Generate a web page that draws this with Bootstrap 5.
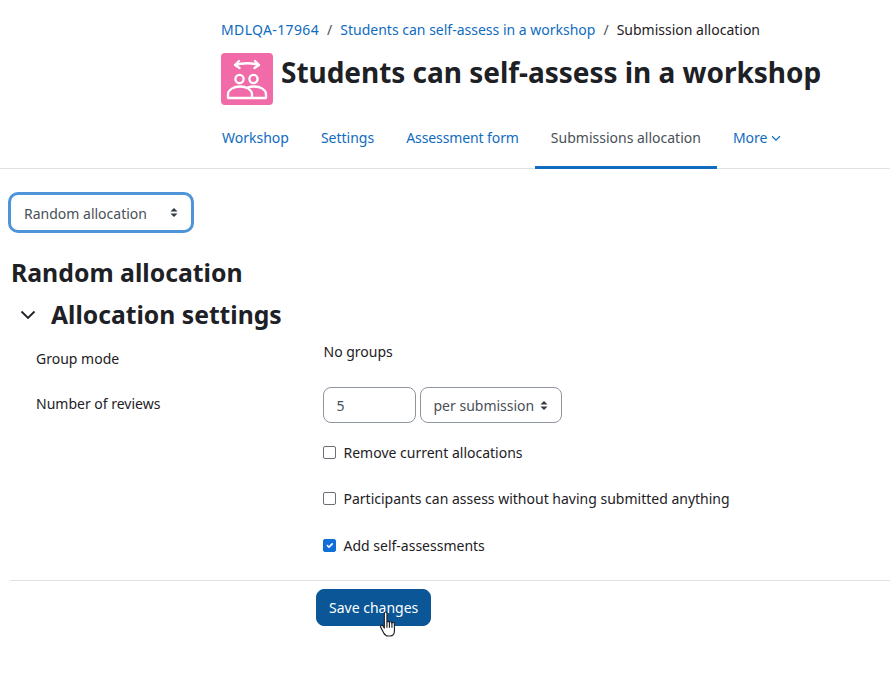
<!DOCTYPE html>
<html lang="en"><head><meta charset="utf-8"><title>Submission allocation</title>
<link rel="stylesheet" href="https://cdn.jsdelivr.net/npm/bootstrap@5.3.0/dist/css/bootstrap.min.css">
<style>
html,body{height:695px;overflow:hidden;background:#fff}
body{font-family:"Noto Sans","Open Sans",sans-serif;font-size:14px;color:#1d2125;line-height:21px}
a{text-decoration:none;color:#0f6cbf}
.hdr{padding:19px 0 0 221px}
.crumbs{--bs-breadcrumb-margin-bottom:0;--bs-breadcrumb-divider-color:#495057;--bs-breadcrumb-item-active-color:#1d2125;--bs-breadcrumb-item-padding-x:8px;height:21px}
.crumb-code{letter-spacing:.36px}
.titlerow{margin-top:13px;height:52px}
.modicon{width:52px;height:52px;border-radius:4px;background:#f06ba8;flex:none}
.pagetitle{font-size:28px;font-weight:700;line-height:40px;margin:-1px 0 0 8px;letter-spacing:-.03px}
.tabs{--bs-nav-link-padding-x:16px;--bs-nav-link-padding-y:0;--bs-nav-link-color:#0f6cbf;--bs-nav-link-hover-color:#0f6cbf;height:63px;font-size:14px}
.tabwrap{border-bottom:1px solid #dee2e6;height:64px;padding-left:206px}
.tabs .nav-link{line-height:21px;padding-top:22px;padding-bottom:19px;height:64px}
.tabs .nav-link.active{color:#495057;border-bottom:3px solid #0f6cbf}
.tabs .nav-item:nth-child(3) .nav-link{letter-spacing:-.1px}
.chev{width:10px;height:7px;margin-left:4px;vertical-align:1px}
.main{padding:23px 0 0 10px}
.focusbox{width:186px;height:41px;margin-left:-2px;border:3px solid #4e94d8;border-radius:10px;padding:2px 13px 0;color:#495057;background:#fff}
.updown{width:8px;height:11px;flex:none}
.focusbox .updown{margin-top:-2px}
.h-random{font-size:24.8px;font-weight:700;line-height:30px;margin:24px 0 0 1px}
.legendrow{margin:12px 0 0 10px;height:32px}
.legendrow h3{font-size:24.7px;font-weight:700;margin:0 0 0 15px;line-height:32px}
.rowline{padding-left:26px}
.lab{width:286.5px;flex:none}
.val{flex:1}
.r1{margin-top:11px;height:35px;padding-top:6px}
.val-static{margin-top:-7px;padding-left:1px}
.numbox{width:93px;height:36px;border:1px solid #8f959e;border-radius:8px;padding:0 13px;line-height:36px;color:#495057}
.perbox{width:142px;height:36px;border:1px solid #8f959e;border-radius:8px;padding:0 13px;color:#495057;margin-left:4px}
.r2{margin-top:10px}
.r2 .lab{padding-top:6px}
.chk{margin:0;padding:0;min-height:0;gap:8px;height:21px}
.chk .form-check-input{margin:0;float:none;width:13px;height:13px;border-radius:2px;border-color:#6a6f76;flex:none}
.chk .form-check-input:checked{background-color:#0f6fd6;border-color:#0f6fd6}
.c1{margin-top:19px}.c2{margin-top:25px}.c3{margin-top:26px}
.sep{border-top:1px solid #dee2e6;margin:24px 0 0 0;opacity:1}
.savewrap{padding:8px 0 0 306px;position:relative}
.savebtn{--bs-btn-bg:#0a5697;--bs-btn-border-color:#0a5697;--bs-btn-hover-bg:#0a5697;--bs-btn-hover-border-color:#0a5697;--bs-btn-color:#fff;--bs-btn-hover-color:#fff;--bs-btn-font-size:14px;--bs-btn-padding-x:12px;--bs-btn-padding-y:0;--bs-btn-border-radius:8px;--bs-btn-line-height:35px;width:115px;height:37px;white-space:nowrap}
.cursor{position:absolute;left:369px;top:30px;width:19px;height:26px}
</style></head><body>
<header class="hdr">
<nav aria-label="breadcrumb"><ol class="breadcrumb crumbs">
<li class="breadcrumb-item"><a class="crumb-code" href="#">MDLQA-17964</a></li>
<li class="breadcrumb-item"><a href="#">Students can self-assess in a workshop</a></li>
<li class="breadcrumb-item active" aria-current="page">Submission allocation</li></ol></nav>
<div class="d-flex titlerow">
<div class="modicon d-flex align-items-center justify-content-center">
<svg width="52" height="52" viewBox="0 0 52 52" fill="none" stroke="#fff" stroke-width="2.3" stroke-linecap="round" stroke-linejoin="round"><path d="M14 12Q26 8.5 38 12M18 8 14 12 18.5 15M34 8 38 12 33.500 15"/><circle cx="18.500" cy="26" r="4.100"/><circle cx="32.500" cy="26" r="4.100"/><path d="M7 45V41.500C7 36.500 13 33.500 19 33.500S31 36.500 31 41.500V45ZM26.500 34.500C28.500 33.800 30.500 33.500 33 33.500 39.500 33.500 45 36.500 45 41.500V45H31"/></svg>
</div>
<h1 class="pagetitle">Students can self-assess in a workshop</h1>
</div>
</header>
<div class="tabwrap">
<ul class="nav tabs">
<li class="nav-item"><a class="nav-link" href="#">Workshop</a></li>
<li class="nav-item"><a class="nav-link" href="#">Settings</a></li>
<li class="nav-item"><a class="nav-link" href="#">Assessment form</a></li>
<li class="nav-item"><a class="nav-link active" href="#">Submissions allocation</a></li>
<li class="nav-item"><a class="nav-link" href="#">More<svg class="chev" viewBox="0 0 9 6" fill="none" stroke="#0f6cbf" stroke-width="1.1"><path d="M1 1 4.5 4.5 8 1"/></svg></a></li>
</ul></div>
<main class="main">
<div class="focusbox d-flex align-items-center justify-content-between">
<span>Random allocation</span>
<svg class="updown" viewBox="0 0 9 12" fill="#343a40"><path d="M4.5 1 8.5 5H.5ZM4.5 11 .5 7H8.5Z"/></svg>
</div>
<h2 class="h-random">Random allocation</h2>
<div class="d-flex align-items-center legendrow">
<svg width="16" height="10" viewBox="0 0 16 10" fill="none" stroke="#1d2125" stroke-width="1.8"><path d="M1.5 1.5 8 8 14.5 1.5"/></svg>
<h3>Allocation settings</h3>
</div>
<div class="d-flex rowline r1"><div class="lab">Group mode</div><div class="val val-static">No groups</div></div>
<div class="d-flex rowline r2"><div class="lab">Number of reviews</div>
<div class="val">
<div class="d-flex">
<div class="numbox">5</div>
<div class="perbox d-flex align-items-center justify-content-between"><span>per submission</span><svg class="updown" viewBox="0 0 9 12" fill="#343a40"><path d="M4.5 1 8.5 5H.5ZM4.5 11 .5 7H8.5Z"/></svg></div>
</div>
<div class="form-check d-flex align-items-center chk c1"><input class="form-check-input" type="checkbox" id="a"><label for="a">Remove current allocations</label></div>
<div class="form-check d-flex align-items-center chk c2"><input class="form-check-input" type="checkbox" id="b"><label for="b">Participants can assess without having submitted anything</label></div>
<div class="form-check d-flex align-items-center chk c3"><input class="form-check-input" type="checkbox" id="c" checked><label for="c">Add self-assessments</label></div>
</div></div>
<hr class="sep">
<div class="savewrap"><button class="btn savebtn" type="button">Save changes</button>
<svg class="cursor" viewBox="0 0 17 25" fill="#fff" stroke="#1d2125" stroke-width="1.1" stroke-linejoin="round"><path d="M4.5 2.2C4.5.6 7 .6 7 2.2V11C7 9.6 9.3 9.6 9.3 11.2 9.4 9.9 11.7 10 11.7 11.6 11.8 10.6 14.2 10.8 14.2 12.4V19C14.2 22 12.5 24 10 24H8C6 24 5 23 3.8 21L.9 15.5C.2 14 2 13 3 14.2L4.5 16.4Z"/><path d="M7 11V16M9.4 11.2V16M11.8 11.6V16" fill="none"/></svg>
</div>
</main>
</body></html>
